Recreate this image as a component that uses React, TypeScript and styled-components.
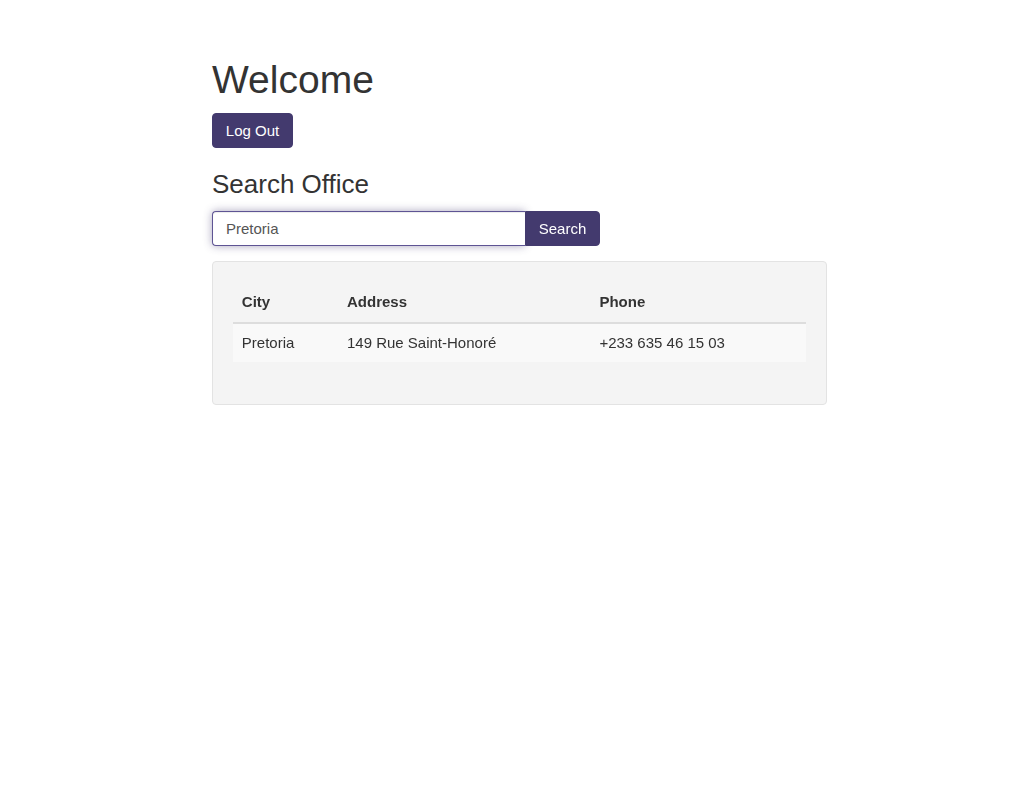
import React, { useState } from "react";
import styled, { createGlobalStyle } from "styled-components";

const purple = "#433a6e";

const GlobalStyle = createGlobalStyle`
  html, body {
    margin: 0;
    padding: 0;
    background: #fff;
  }
  body {
    font-family: "Liberation Sans", Arial, sans-serif;
    font-size: 15px;
    line-height: 1.45;
    color: #333;
  }
  * {
    box-sizing: border-box;
  }
`;

const Page = styled.div`
  width: 615px;
  margin-left: 212px;
  padding-top: 58px;
`;

const Title = styled.h1`
  margin: 0 0 11px;
  font-size: 39px;
  font-weight: 400;
  line-height: 44px;
`;

const Button = styled.button<{ $joined?: boolean }>`
  display: inline-block;
  height: 35px;
  padding: 0 13px;
  font-family: inherit;
  font-size: 15px;
  color: #fff;
  background: ${purple};
  border: 1px solid ${purple};
  border-radius: ${(p) => (p.$joined ? "0 4px 4px 0" : "4px")};
  cursor: pointer;
`;

const LogOutButton = styled(Button)`
  width: 81px;
  padding: 0;
`;

const SubTitle = styled.h3`
  margin: 22px 0 12px;
  font-size: 26px;
  font-weight: 400;
  line-height: 29px;
`;

const SearchRow = styled.form`
  display: flex;
  width: 388px;
`;

const SearchInput = styled.input`
  width: 313px;
  height: 35px;
  padding: 0 13px;
  font-family: inherit;
  font-size: 15px;
  color: #555;
  caret-color: #333;
  border: 1px solid #5e5494;
  border-right: none;
  border-radius: 4px 0 0 4px;
  box-shadow: inset 0 1px 1px rgba(0, 0, 0, 0.075), 0 0 8px rgba(67, 58, 110, 0.45);
  outline: none;
`;

const SearchButton = styled(Button)`
  width: 75px;
  padding: 0;
`;

const Well = styled.div`
  margin-top: 15px;
  padding: 20px;
  background: #f4f4f4;
  border: 1px solid #e3e3e3;
  border-radius: 4px;
`;

const Table = styled.table`
  width: 100%;
  margin-bottom: 22px;
  border-collapse: collapse;
  border-spacing: 0;
`;

const Th = styled.th<{ $w: number }>`
  width: ${(p) => p.$w}px;
  padding: 9px 8.8px;
  text-align: left;
  font-weight: 700;
  border-bottom: 2px solid #ddd;
`;

const Row = styled.tr`
  background: #f9f9f9;
`;

const Td = styled.td`
  padding: 8px 8.8px;
`;

const offices = [
  { city: "Pretoria", address: "149 Rue Saint-Honoré", phone: "+233 635 46 15 03" },
];

export default function App() {
  const [query, setQuery] = useState("Pretoria");
  return (
    <>
      <GlobalStyle />
      <Page>
        <Title>Welcome</Title>
        <LogOutButton>Log Out</LogOutButton>
        <SubTitle>Search Office</SubTitle>
        <SearchRow onSubmit={(e) => e.preventDefault()}>
          <SearchInput
            autoFocus
            value={query}
            onChange={(e) => setQuery(e.target.value)}
          />
          <SearchButton $joined type="submit">
            Search
          </SearchButton>
        </SearchRow>
        <Well>
          <Table>
            <thead>
              <tr>
                <Th $w={105}>City</Th>
                <Th $w={252}>Address</Th>
                <Th $w={215}>Phone</Th>
              </tr>
            </thead>
            <tbody>
              {offices.map((o) => (
                <Row key={o.city}>
                  <Td>{o.city}</Td>
                  <Td>{o.address}</Td>
                  <Td>{o.phone}</Td>
                </Row>
              ))}
            </tbody>
          </Table>
        </Well>
      </Page>
    </>
  );
}
